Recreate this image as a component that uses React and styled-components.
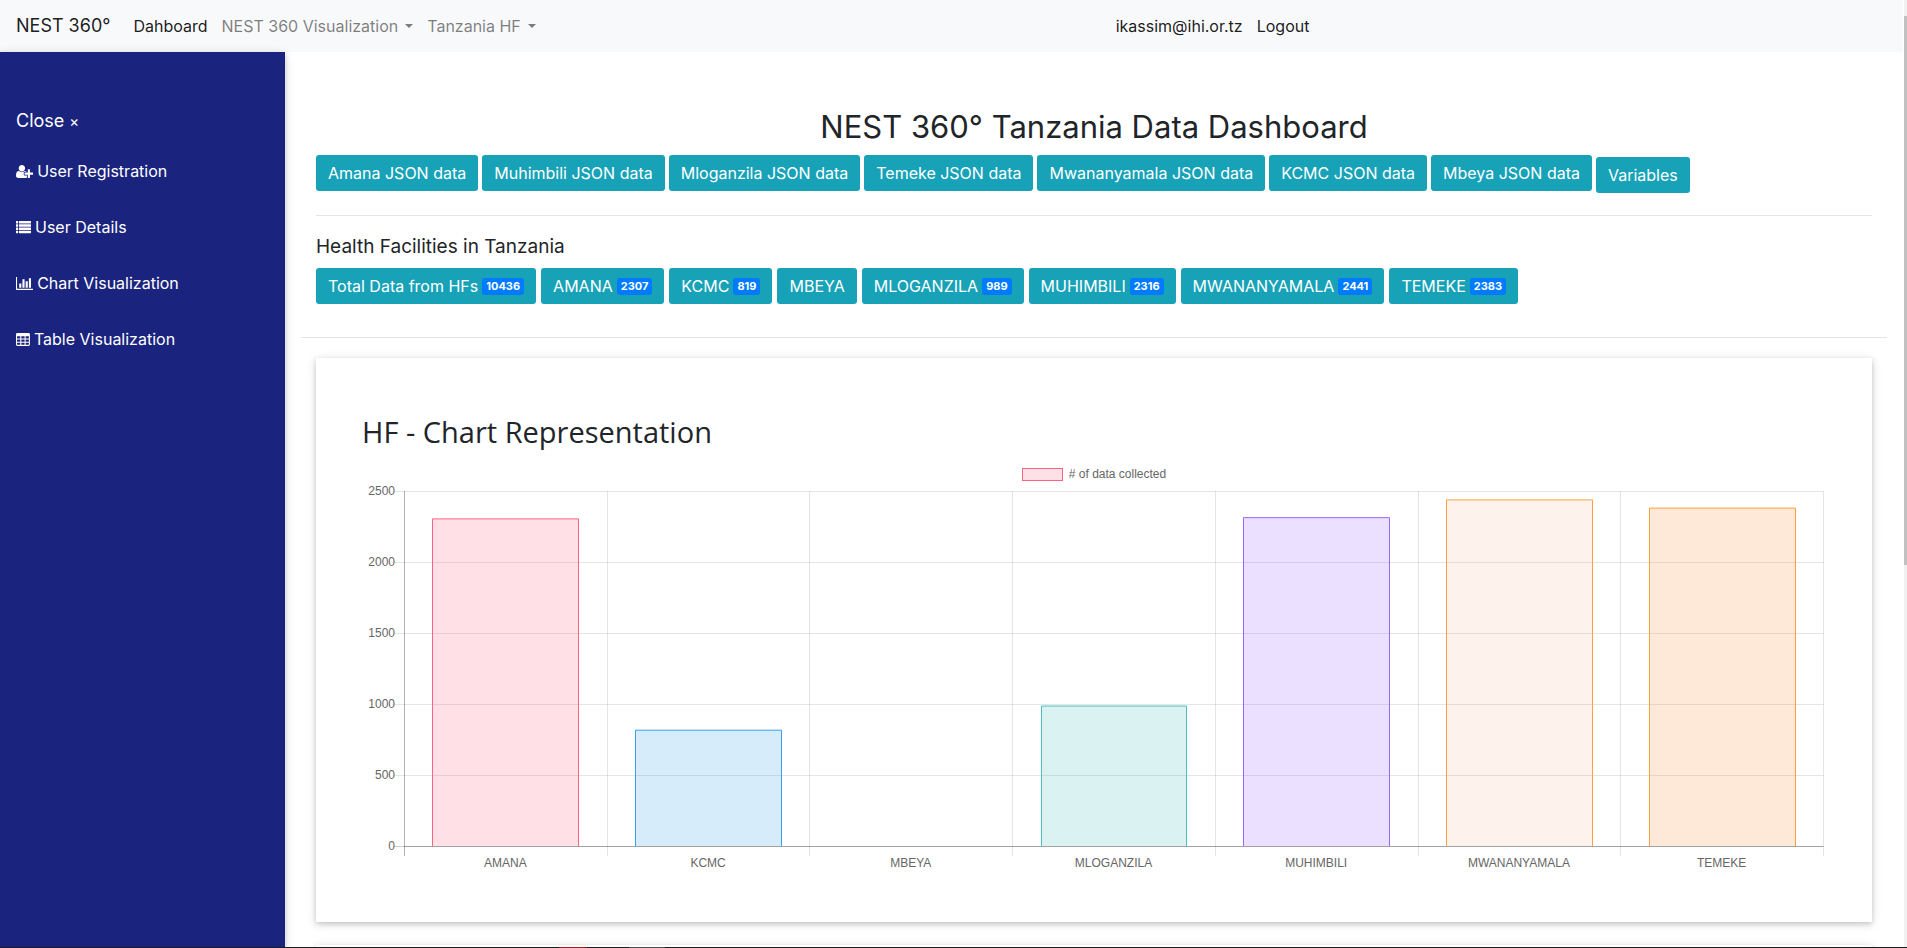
import React, { useEffect, useRef, useState } from 'react';
import styled, { createGlobalStyle } from 'styled-components';

const GlobalStyle = createGlobalStyle`
  *, *::before, *::after {
    box-sizing: border-box;
  }
  html {
    overflow: hidden;
  }
  body {
    margin: 0;
    background: #fff;
    color: #212529;
    font-family: Inter, 'Open Sans', sans-serif;
    font-size: 16px;
    line-height: 24px;
  }
`;

const Page = styled.div`
  display: flex;
  flex-direction: column;
  height: 100vh;
`;

const Viewport = styled.div`
  display: flex;
  flex: 1;
  min-height: 0;
`;

const Taskbar = styled.div`
  flex: none;
  height: 1px;
  background: linear-gradient(
    to right,
    #1c1c1c 559px, #a3191d 559px, #a3191d 587px,
    #1c1c1c 587px, #1c1c1c 629px, #4d4d4d 629px, #4d4d4d 665px, #1c1c1c 665px
  );
`;

const Screen = styled.div`
  flex: 1;
  min-width: 0;
  display: flex;
  flex-direction: column;
`;

const Navbar = styled.nav`
  display: flex;
  align-items: center;
  flex: none;
  height: 52px;
  padding: 0 16px;
  background: #f8f9fa;
`;

const Brand = styled.a`
  margin-right: 16px;
  color: rgba(0, 0, 0, 0.9);
  font-size: 18px;
  line-height: 28px;
  text-decoration: none;
`;

const NavList = styled.ul`
  display: flex;
  margin: 0;
  padding: 0;
  list-style: none;
`;

const UserList = styled(NavList)`
  width: 41.6%;
  margin-left: auto;
`;

const NavLink = styled.a`
  display: flex;
  align-items: center;
  padding: 8px 7px;
  color: ${({ $active }) => ($active ? 'rgba(0, 0, 0, 0.9)' : 'rgba(0, 0, 0, 0.5)')};
  text-decoration: none;
`;

const Caret = styled.span`
  margin-left: 7px;
  border-top: 4px solid;
  border-right: 4px solid transparent;
  border-left: 4px solid transparent;
`;

const Body = styled.div`
  display: flex;
  flex: 1;
  min-height: 0;
`;

const Sidebar = styled.aside`
  flex: none;
  width: 285px;
  padding-top: 48px;
  background: #1a237e;
  box-shadow: 0 2px 5px 0 rgba(0, 0, 0, 0.16), 0 2px 10px 0 rgba(0, 0, 0, 0.12);
`;

const CloseButton = styled.button`
  display: block;
  width: 100%;
  padding: 7px 16px;
  border: 0;
  background: none;
  color: #fff;
  font: inherit;
  font-size: 18px;
  line-height: 28px;
  text-align: left;
`;

const CloseMark = styled.span`
  font-size: 15px;
`;

const SideLink = styled.a`
  display: flex;
  align-items: center;
  gap: 4px;
  height: 56px;
  padding: 0 16px;
  color: #fff;
  text-decoration: none;

  svg {
    height: 15px;
    fill: currentColor;
  }
`;

const Main = styled.main`
  flex: 1;
  min-width: 0;
  overflow: hidden;
  padding: 57px 16px 0;
`;

const Section = styled.section`
  padding: 0 15px;
`;

const Title = styled.h2`
  margin: 0 0 10px;
  font-size: 31px;
  font-weight: 400;
  line-height: 36px;
  text-align: center;
`;

const Subtitle = styled.h5`
  margin: 0 0 9px;
  font-size: 19px;
  font-weight: 400;
  line-height: 24px;
`;

const ButtonRow = styled.div`
  display: flex;
  align-items: flex-start;
  gap: ${({ $gap }) => $gap}px;
`;

const Button = styled.button`
  display: flex;
  align-items: center;
  gap: 4px;
  height: 36px;
  margin-top: ${({ $dropped }) => ($dropped ? 2 : 0)}px;
  padding: 0 12px;
  border: 0;
  border-radius: 3px;
  background: #17a2b8;
  color: #fff;
  font: inherit;
  white-space: nowrap;
`;

const Badge = styled.span`
  padding: 0 4px;
  border-radius: 3px;
  background: #007bff;
  font-size: 11px;
  font-weight: 700;
  line-height: 17px;
`;

const Rule = styled.hr`
  margin: ${({ $top }) => $top}px 0 ${({ $bottom }) => $bottom}px;
  border: 0;
  border-top: 1px solid rgba(0, 0, 0, 0.1);
`;

const Card = styled.div`
  margin: 0 15px 23px;
  padding: 56px 46px 48px;
  background: #fff;
  box-shadow: 0 2px 5px 0 rgba(0, 0, 0, 0.16), 0 2px 10px 0 rgba(0, 0, 0, 0.12);
`;

const CardTitle = styled.h2`
  margin: 0 0 14px;
  font-family: 'Open Sans', 'Noto Sans', sans-serif;
  font-size: 29px;
  font-weight: 400;
  line-height: 36px;
`;

const Legend = styled.div`
  display: flex;
  align-items: center;
  justify-content: center;
  gap: 6px;
  height: 20px;
  color: #666;
  font-family: 'Liberation Sans', Arial, sans-serif;
  font-size: 12px;
`;

const Swatch = styled.span`
  width: 41px;
  height: 13px;
  border: 1px solid #ff6384;
  background: rgba(255, 99, 132, 0.2);
`;

const ChartBox = styled.div`
  height: 390px;

  svg {
    display: block;
  }

  text {
    fill: #666;
    font-family: 'Liberation Sans', Arial, sans-serif;
    font-size: 12px;
  }
`;

const Scrollbar = styled.div`
  flex: none;
  width: 4px;
  padding-top: 16px;
  border-left: 1px solid #fff;
  background: #f1f1f1;
`;

const Thumb = styled.div`
  height: 59%;
  background: #c1c1c1;
`;

const UserPlusIcon = () => (
  <svg viewBox="0 0 2048 1792" aria-hidden="true">
    <path d="M704 896q-159 0-271.5-112.5t-112.5-271.5 112.5-271.5 271.5-112.5 271.5 112.5 112.5 271.5-112.5 271.5-271.5 112.5zm960 128h352q13 0 22.5 9.5t9.5 22.5v192q0 13-9.5 22.5t-22.5 9.5h-352v352q0 13-9.5 22.5t-22.5 9.5h-192q-13 0-22.5-9.5t-9.5-22.5v-352h-352q-13 0-22.5-9.5t-9.5-22.5v-192q0-13 9.5-22.5t22.5-9.5h352v-352q0-13 9.5-22.5t22.5-9.5h192q13 0 22.5 9.5t9.5 22.5v352zm-736 224q0 52 38 90t90 38h256v238q-68 50-171 50h-874q-121 0-194-69t-73-190q0-53 3.5-103.5t14-109 26.5-108.5 43-97.5 62-81 85.5-53.5 111.5-20q19 0 39 17 79 61 154.5 91.5t164.5 30.5 164.5-30.5 154.5-91.5q20-17 39-17 132 0 217 96h-223q-52 0-90 38t-38 90v192z" />
  </svg>
);

const ListIcon = () => (
  <svg viewBox="0 0 1792 1792" aria-hidden="true">
    {[128, 512, 896, 1280].map(y => (
      <React.Fragment key={y}>
        <rect x="0" y={y} width="256" height="288" rx="32" />
        <rect x="352" y={y} width="1440" height="288" rx="32" />
      </React.Fragment>
    ))}
  </svg>
);

const BarChartIcon = () => (
  <svg viewBox="0 0 2048 1792" aria-hidden="true">
    <path d="M640 896v512h-256v-512h256zm384-512v1024h-256v-1024h256zm1024 1152v128h-2048v-1536h128v1408h1920zm-640-896v768h-256v-768h256zm384-384v1152h-256v-1152h256z" />
  </svg>
);

const TableIcon = () => (
  <svg viewBox="0 0 1664 1792" aria-hidden="true">
    <path
      fillRule="evenodd"
      d="M160 128h1344q160 0 160 160v1216q0 160-160 160h-1344q-160 0-160-160v-1216q0-160 160-160zM128 512v256h384v-256zM640 512v256h384v-256zM1152 512v256h384v-256zM128 896v256h384v-256zM640 896v256h384v-256zM1152 896v256h384v-256zM128 1280v256h384v-256zM640 1280v256h384v-256zM1152 1280v256h384v-256z"
    />
  </svg>
);

const sideLinks = [
  { label: 'User Registration', Icon: UserPlusIcon },
  { label: 'User Details', Icon: ListIcon },
  { label: 'Chart Visualization', Icon: BarChartIcon },
  { label: 'Table Visualization', Icon: TableIcon },
];

const jsonSources = ['Amana', 'Muhimbili', 'Mloganzila', 'Temeke', 'Mwananyamala', 'KCMC', 'Mbeya'];

const facilities = [
  { name: 'AMANA', count: 2307, border: '#ff6384', fill: 'rgba(255, 99, 132, 0.2)' },
  { name: 'KCMC', count: 819, border: '#36a2eb', fill: 'rgba(54, 162, 235, 0.2)' },
  { name: 'MBEYA', count: 0, border: '#ffce56', fill: 'rgba(255, 206, 86, 0.2)' },
  { name: 'MLOGANZILA', count: 989, border: '#4bc0c0', fill: 'rgba(75, 192, 192, 0.2)' },
  { name: 'MUHIMBILI', count: 2316, border: '#9966ff', fill: 'rgba(153, 102, 255, 0.2)' },
  { name: 'MWANANYAMALA', count: 2441, border: '#ff9f40', fill: 'rgba(250, 150, 100, 0.12)' },
  { name: 'TEMEKE', count: 2383, border: '#ff9f40', fill: 'rgba(250, 140, 55, 0.2)' },
];

const ticks = [2500, 2000, 1500, 1000, 500, 0];
const MAX = 2500;
const PLOT = { left: 42, right: 3, top: 7, height: 355 };

const BarChart = () => {
  const box = useRef(null);
  const [width, setWidth] = useState(1464);

  useEffect(() => {
    const measure = () => setWidth(box.current.clientWidth);
    measure();
    window.addEventListener('resize', measure);
    return () => window.removeEventListener('resize', measure);
  }, []);

  const step = (width - PLOT.left - PLOT.right) / facilities.length;
  const bottom = PLOT.top + PLOT.height;
  const lineX = i => Math.round(PLOT.left + step * i) + 0.5;
  const lineY = value => Math.round(bottom - (PLOT.height * value) / MAX) + 0.5;

  return (
    <ChartBox ref={box}>
      <svg width={width} height="390" role="img" aria-label="# of data collected">
        {ticks.map(value => (
          <g key={value}>
            <line
              x1={PLOT.left - 10}
              x2={lineX(facilities.length)}
              y1={lineY(value)}
              y2={lineY(value)}
              stroke={value === 0 ? 'rgba(0, 0, 0, 0.2)' : 'rgba(0, 0, 0, 0.1)'}
            />
            <text x={PLOT.left - 9} y={lineY(value) + 3} textAnchor="end">{value}</text>
          </g>
        ))}
        {[...facilities, null].map((_facility, i) => (
          <line
            key={i}
            x1={lineX(i)}
            x2={lineX(i)}
            y1={PLOT.top}
            y2={bottom + 10}
            stroke={i === 0 ? 'rgba(0, 0, 0, 0.3)' : 'rgba(0, 0, 0, 0.1)'}
          />
        ))}
        {facilities.map(({ name, count, border, fill }, i) => {
          const center = PLOT.left + step * (i + 0.5);
          const left = Math.round(center - step * 0.36) + 0.5;
          const right = Math.round(center + step * 0.36) + 0.5;
          const top = bottom - (PLOT.height * count) / MAX + 0.5;
          return (
            <g key={name}>
              {count > 0 && (
                <path
                  d={`M${left} ${bottom}V${top}H${right}V${bottom}`}
                  fill={fill}
                  stroke={border}
                />
              )}
              <text x={center} y={bottom + 21} textAnchor="middle">{name}</text>
            </g>
          );
        })}
        <line
          x1={PLOT.left}
          x2={lineX(facilities.length)}
          y1={bottom + 0.5}
          y2={bottom + 0.5}
          stroke="rgba(0, 0, 0, 0.2)"
        />
      </svg>
    </ChartBox>
  );
};

const App = () => (
  <>
    <GlobalStyle />
    <Page>
      <Viewport>
        <Screen>
          <Navbar>
            <Brand href="#">NEST 360°</Brand>
            <NavList>
              <li><NavLink href="#" $active>Dahboard</NavLink></li>
              <li><NavLink href="#">NEST 360 Visualization<Caret /></NavLink></li>
              <li><NavLink href="#">Tanzania HF<Caret /></NavLink></li>
            </NavList>
            <UserList>
              <li><NavLink href="#" $active>ikassim@ihi.or.tz</NavLink></li>
              <li><NavLink href="#" $active>Logout</NavLink></li>
            </UserList>
          </Navbar>
          <Body>
            <Sidebar>
              <CloseButton>Close <CloseMark>×</CloseMark></CloseButton>
              {sideLinks.map(({ label, Icon }) => (
                <SideLink key={label} href="#">
                  <Icon />
                  {label}
                </SideLink>
              ))}
            </Sidebar>
            <Main>
              <Section>
                <Title>NEST 360° Tanzania Data Dashboard</Title>
                <ButtonRow $gap={4}>
                  {jsonSources.map(source => (
                    <Button key={source}>{source} JSON data</Button>
                  ))}
                  <Button $dropped>Variables</Button>
                </ButtonRow>
                <Rule $top={22} $bottom={19} />
                <Subtitle>Health Facilities in Tanzania</Subtitle>
                <ButtonRow $gap={5}>
                  <Button>Total Data from HFs <Badge>10436</Badge></Button>
                  {facilities.map(({ name, count }) => (
                    <Button key={name}>
                      {name}
                      {count > 0 && <Badge>{count}</Badge>}
                    </Button>
                  ))}
                </ButtonRow>
              </Section>
              <Rule $top={33} $bottom={20} />
              <Card>
                <CardTitle>HF - Chart Representation</CardTitle>
                <Legend>
                  <Swatch />
                  # of data collected
                </Legend>
                <BarChart />
              </Card>
              <Card />
            </Main>
          </Body>
        </Screen>
        <Scrollbar>
          <Thumb />
        </Scrollbar>
      </Viewport>
      <Taskbar />
    </Page>
  </>
);

export default App;
